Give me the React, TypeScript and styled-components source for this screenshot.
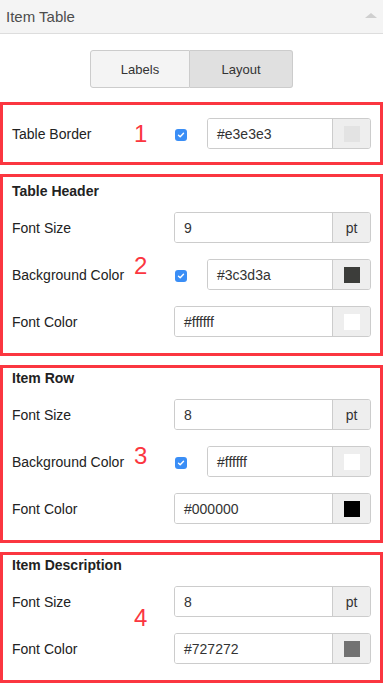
import React from 'react';
import styled, {createGlobalStyle} from 'styled-components';

const GlobalStyle = createGlobalStyle`
  html, body {
    margin: 0;
    padding: 0;
    background: #ffffff;
  }
  body {
    font-family: "Liberation Sans", Arial, sans-serif;
    color: #333333;
  }
`

const Panel = styled.div`
  width: 383px;
  background: #ffffff;
`

const PanelHeader = styled.div`
  height: 33px;
  border-bottom: 1px solid #dddddd;
  background: #f4f4f4;
  display: flex;
  align-items: center;
  justify-content: space-between;
  padding: 0 6px 0 6px;
  font-size: 15px;
  color: #4d4d4d;
`

const Caret = styled.span`
  width: 0;
  height: 0;
  border-left: 6px solid transparent;
  border-right: 6px solid transparent;
  border-bottom: 5px solid #cfcfcf;
  margin-right: 0;
  margin-bottom: 2px;
`

const Tabs = styled.div`
  display: flex;
  justify-content: center;
  margin: 16px 0 14px;
`

const Tab = styled.button<{ $active?: boolean }>`
  height: 38px;
  width: ${p => p.$active ? '103px' : '100px'};
  border: 1px solid #cccccc;
  background: ${p => p.$active ? '#e0e0e0' : '#f4f4f4'};
  font-family: inherit;
  font-size: 13px;
  color: #333333;
  padding: 0;
  cursor: pointer;

  &:first-child {
    border-radius: 3px 0 0 3px;
  }

  &:last-child {
    border-left: none;
    border-radius: 0 3px 3px 0;
  }
`

const Section = styled.section<{ $top: number; $bottom: number }>`
  position: relative;
  border: 3px solid #fb3640;
  padding: ${p => p.$top}px 9px ${p => p.$bottom}px;
  margin-bottom: 9px;
`

const SectionTitle = styled.div`
  font-size: 14px;
  font-weight: bold;
  line-height: 18px;
  color: #222222;
  margin-bottom: 12px;
`

const Rows = styled.div`
  display: grid;
  gap: 16px;
`

const Row = styled.div`
  display: grid;
  grid-template-columns: 162px 1fr;
  align-items: center;
  height: 31px;
`

const Label = styled.span`
  font-size: 14px;
  color: #222222;
`

const Control = styled.div`
  display: flex;
  align-items: center;
  height: 31px;
`

const CheckCell = styled.div`
  width: 33px;
  display: flex;
  align-items: center;
  padding-left: 1px;
  padding-top: 3px;
  box-sizing: border-box;
`

const Check = styled.span`
  width: 12px;
  height: 12px;
  border-radius: 3px;
  background: #3a8ef6;
  display: flex;
  align-items: center;
  justify-content: center;
`

const InputGroup = styled.div`
  flex: 1;
  display: flex;
  height: 31px;
  border: 1px solid #cccccc;
  border-radius: 3px;
  box-sizing: border-box;
  overflow: hidden;
`

const Field = styled.div`
  flex: 1;
  display: flex;
  align-items: center;
  padding-left: 9px;
  font-size: 14px;
  color: #333333;
  background: #ffffff;
`

const Addon = styled.div`
  width: 37px;
  border-left: 1px solid #cccccc;
  background: #eeeeee;
  display: flex;
  align-items: center;
  justify-content: center;
  font-size: 14px;
  color: #333333;
`

const Swatch = styled.span<{ $color: string }>`
  width: 16px;
  height: 16px;
  background: ${p => p.$color};
`

const Marker = styled.span<{ $top: number }>`
  position: absolute;
  left: 131px;
  top: ${p => p.$top}px;
  font-size: 24px;
  line-height: 24px;
  color: #fb3640;
`

type FieldRow =
    | { kind: 'size'; label: string; value: string }
    | { kind: 'color'; label: string; value: string; checkbox?: boolean }

type Group = {
    title?: string
    marker: string
    markerTop: number
    top: number
    bottom: number
    rows: FieldRow[]
}

const groups: Group[] = [
    {
        marker: '1', markerTop: 17, top: 13, bottom: 13,
        rows: [{kind: 'color', label: 'Table Border', value: '#e3e3e3', checkbox: true}]
    },
    {
        title: 'Table Header', marker: '2', markerTop: 77, top: 5, bottom: 16,
        rows: [
            {kind: 'size', label: 'Font Size', value: '9'},
            {kind: 'color', label: 'Background Color', value: '#3c3d3a', checkbox: true},
            {kind: 'color', label: 'Font Color', value: '#ffffff'},
        ]
    },
    {
        title: 'Item Row', marker: '3', markerTop: 76, top: 1, bottom: 16,
        rows: [
            {kind: 'size', label: 'Font Size', value: '8'},
            {kind: 'color', label: 'Background Color', value: '#ffffff', checkbox: true},
            {kind: 'color', label: 'Font Color', value: '#000000'},
        ]
    },
    {
        title: 'Item Description', marker: '4', markerTop: 51, top: 1, bottom: 16,
        rows: [
            {kind: 'size', label: 'Font Size', value: '8'},
            {kind: 'color', label: 'Font Color', value: '#727272'},
        ]
    },
]

const CheckMark = () => (
    <Check>
        <svg width="8" height="8" viewBox="0 0 8 8">
            <path d="M1.5 4.2 L3.2 5.8 L6.5 2.2" fill="none" stroke="#ffffff" strokeWidth="1.4"
                  strokeLinecap="round" strokeLinejoin="round"/>
        </svg>
    </Check>
)

const SettingRow = ({row}: { row: FieldRow }) => (
    <Row>
        <Label>{row.label}</Label>
        <Control>
            {row.kind === 'color' && row.checkbox && <CheckCell><CheckMark/></CheckCell>}
            <InputGroup>
                <Field>{row.value}</Field>
                <Addon>
                    {row.kind === 'size' ? 'pt' : <Swatch $color={row.value}/>}
                </Addon>
            </InputGroup>
        </Control>
    </Row>
)

const App = () => {
    return (
        <Panel>
            <GlobalStyle/>
            <PanelHeader>
                <span>Item Table</span>
                <Caret/>
            </PanelHeader>
            <Tabs>
                <Tab>Labels</Tab>
                <Tab $active>Layout</Tab>
            </Tabs>
            {groups.map(g => (
                <Section key={g.marker} $top={g.top} $bottom={g.bottom}>
                    {g.title && <SectionTitle>{g.title}</SectionTitle>}
                    <Rows>
                        {g.rows.map((r, i) => <SettingRow key={i} row={r}/>)}
                    </Rows>
                    <Marker $top={g.markerTop}>{g.marker}</Marker>
                </Section>
            ))}
        </Panel>
    );
};

export default App;
